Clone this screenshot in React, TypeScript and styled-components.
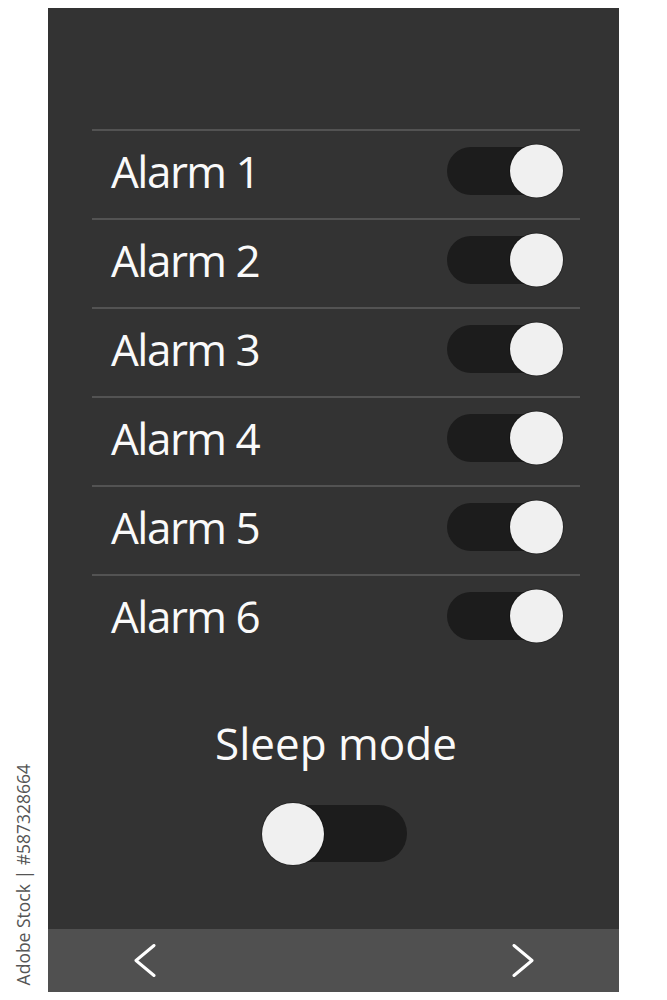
import React from 'react';
import styled, { createGlobalStyle } from 'styled-components';

const GlobalStyle = createGlobalStyle`
	html,
	body {
		margin: 0;
		padding: 0;
		background: #ffffff;
		font-family: 'Open Sans', 'Noto Sans', sans-serif;
	}
`;

type SwitchSize = 'md' | 'lg';

const switchSizes: Record<SwitchSize, { width: number; height: number; knob: number }> = {
	md: { width: 113, height: 48, knob: 53 },
	lg: { width: 142, height: 57, knob: 62 },
};

const StyledPage = styled.div`
	display: flex;
	width: 667px;
	height: 1000px;
	padding: 8px 0;
	box-sizing: border-box;
`;

const StyledGutter = styled.div`
	width: 48px;
	display: flex;
	flex-direction: column;
	justify-content: flex-end;
	align-items: center;
	padding-bottom: 7px;
	box-sizing: border-box;
`;

const StyledCaption = styled.span`
	writing-mode: vertical-rl;
	transform: rotate(180deg);
	font-size: 17.5px;
	color: #555555;
	white-space: nowrap;
	line-height: 1;
`;

const StyledPanel = styled.div`
	width: 571px;
	height: 984px;
	background: #333333;
	display: flex;
	flex-direction: column;
`;

const StyledContent = styled.div`
	flex: 1;
	padding: 121px 39px 0 44px;
	display: flex;
	flex-direction: column;
`;

const StyledRow = styled.div`
	height: 89px;
	box-sizing: border-box;
	border-top: 2px solid #535353;
	display: flex;
	align-items: center;
	justify-content: space-between;
	padding: 0 20px 8px 19px;
`;

const StyledLabel = styled.span<{ $tracking?: number }>`
	font-size: 44px;
	line-height: 1;
	color: #fafafa;
	letter-spacing: ${(props): number => props.$tracking ?? 0}px;
`;

const StyledSleep = styled.div`
	margin-top: 58px;
	display: flex;
	flex-direction: column;
	align-items: center;
	gap: 40px;
`;

const StyledTrack = styled.div<{ $size: SwitchSize }>`
	position: relative;
	width: ${(props): number => switchSizes[props.$size].width}px;
	height: ${(props): number => switchSizes[props.$size].height}px;
	border-radius: ${(props): number => switchSizes[props.$size].height / 2}px;
	background: #1c1c1c;
	flex-shrink: 0;
`;

const StyledKnob = styled.span<{ $size: SwitchSize; $on: boolean }>`
	position: absolute;
	top: 50%;
	transform: translateY(-50%);
	${(props): string => (props.$on ? 'right: -3px;' : 'left: -3px;')}
	width: ${(props): number => switchSizes[props.$size].knob}px;
	height: ${(props): number => switchSizes[props.$size].knob}px;
	border-radius: 50%;
	background: #f0f0f0;
	box-shadow: 0 0 0 1px rgba(0, 0, 0, 0.25);
`;

const StyledNavBar = styled.div`
	height: 63px;
	background: #505050;
	display: flex;
	align-items: center;
	justify-content: space-between;
	padding: 0 85px 0 86px;
`;

const StyledNavButton = styled.button`
	border: 0;
	padding: 0;
	background: none;
	display: flex;
	cursor: pointer;
`;

const Switch: React.FunctionComponent<{ size: SwitchSize; on: boolean }> = ({ size, on }) => (
	<StyledTrack $size={size} role='switch' aria-checked={on}>
		<StyledKnob $size={size} $on={on} />
	</StyledTrack>
);

const Chevron: React.FunctionComponent<{ direction: 'left' | 'right' }> = ({ direction }) => (
	<svg width='22' height='33' viewBox='0 0 22 33'>
		<polyline
			points={direction === 'left' ? '20,1.5 2,16.5 20,31.5' : '2,1.5 20,16.5 2,31.5'}
			fill='none'
			stroke='#ffffff'
			strokeWidth='3'
			strokeLinecap='round'
			strokeLinejoin='round'
		/>
	</svg>
);

const alarms = [1, 2, 3, 4, 5, 6];

const App: React.FunctionComponent = () => {
	return (
		<>
			<GlobalStyle />
			<StyledPage>
				<StyledGutter>
					<StyledCaption>Adobe Stock | #587328664</StyledCaption>
				</StyledGutter>
				<StyledPanel>
					<StyledContent>
						{alarms.map((n) => (
							<StyledRow key={n}>
								<StyledLabel $tracking={-1.5}>Alarm {n}</StyledLabel>
								<Switch size='md' on />
							</StyledRow>
						))}
						<StyledSleep>
							<StyledLabel>Sleep mode</StyledLabel>
							<Switch size='lg' on={false} />
						</StyledSleep>
					</StyledContent>
					<StyledNavBar>
						<StyledNavButton aria-label='Previous'>
							<Chevron direction='left' />
						</StyledNavButton>
						<StyledNavButton aria-label='Next'>
							<Chevron direction='right' />
						</StyledNavButton>
					</StyledNavBar>
				</StyledPanel>
			</StyledPage>
		</>
	);
};

export default App;
